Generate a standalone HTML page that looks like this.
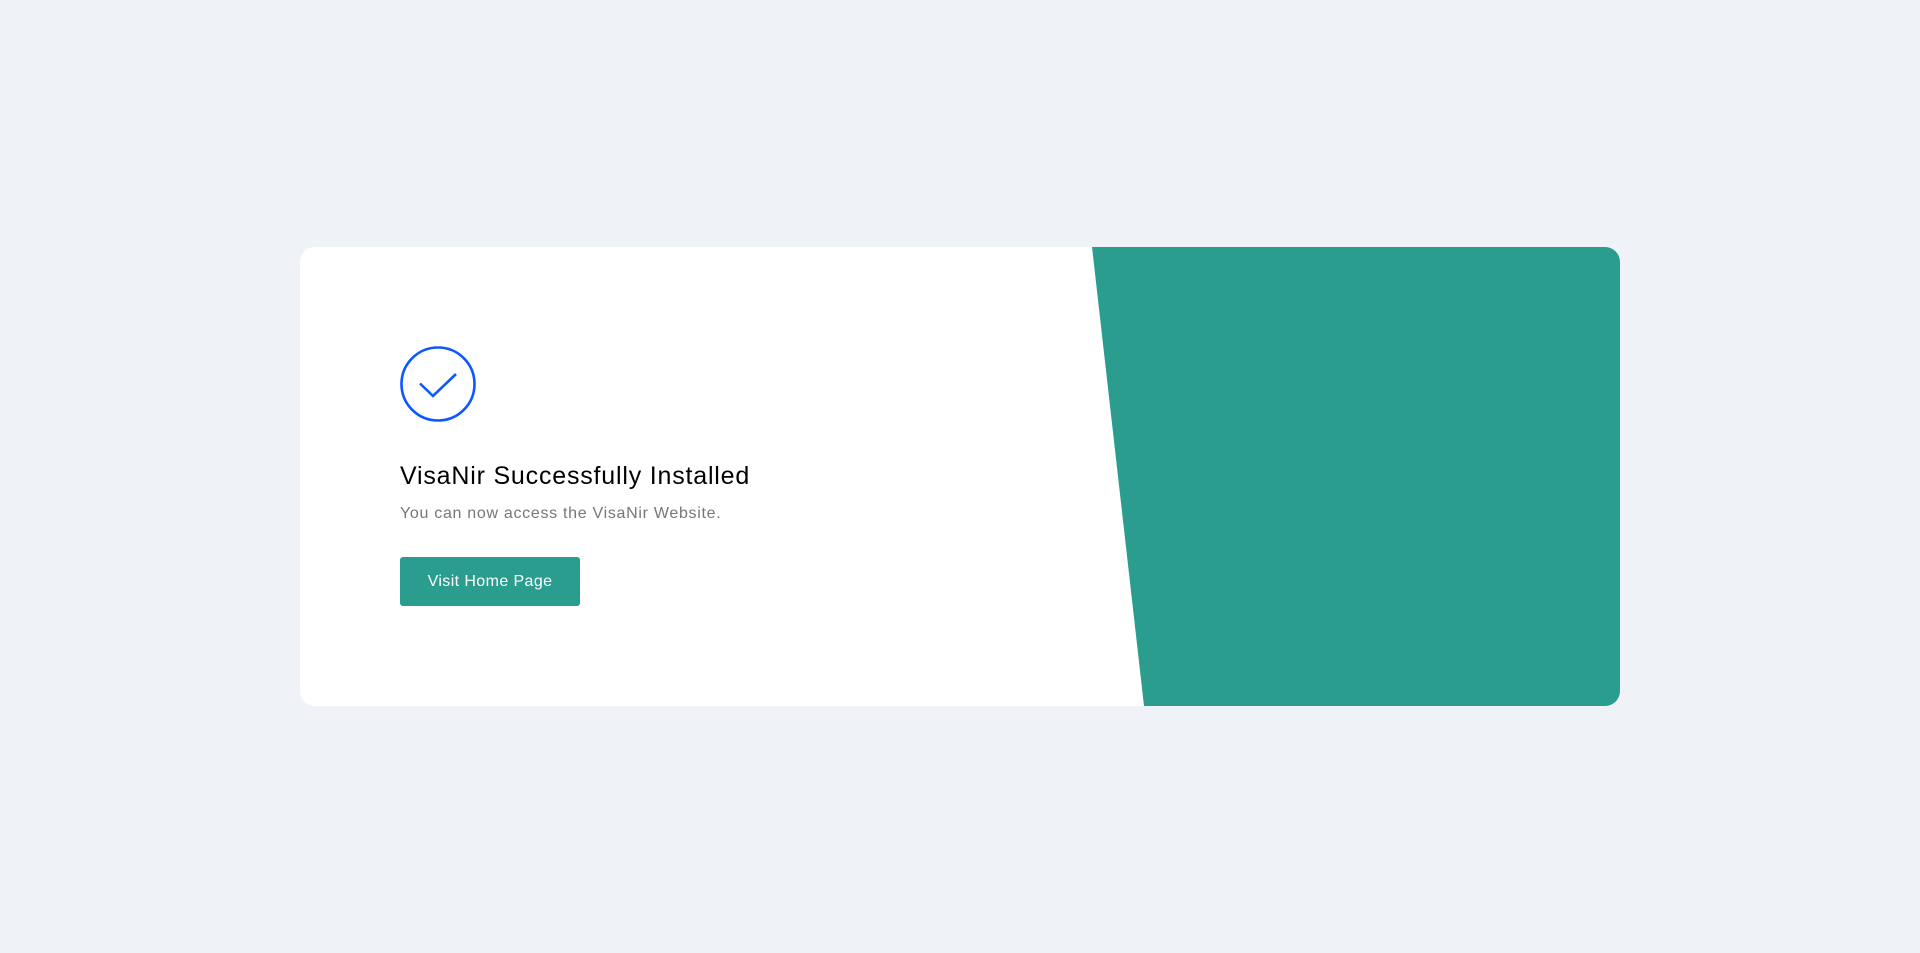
<!DOCTYPE html>
<html><head><style>
html,body{margin:0;padding:0;width:1920px;height:953px;background:#eff3f8;overflow:hidden;font-family:"Liberation Sans",sans-serif;}
.card{position:absolute;left:300px;top:247px;width:1320px;height:459px;background:#fff;border-radius:15px;overflow:hidden;}
.card svg.bg{position:absolute;left:0;top:0;}
.icon{position:absolute;left:399px;top:345px;}
h1{position:absolute;left:400px;top:462px;margin:0;font-size:25px;font-weight:normal;color:#000;letter-spacing:0.8px;white-space:nowrap;}
p{position:absolute;left:400px;top:505px;margin:0;font-size:16px;color:#777;white-space:nowrap;letter-spacing:0.7px;}
.btn{position:absolute;left:400px;top:557px;width:180px;height:49px;background:#2a9d8f;border-radius:3px;color:#fff;font-size:16px;line-height:49px;text-align:center;letter-spacing:0.4px;}
</style></head><body>
<div class="card"><svg class="bg" width="1320" height="459"><polygon points="792,0 1320,0 1320,459 844,459" fill="#2a9d8f"/></svg></div>
<svg class="icon" width="78" height="78" viewBox="0 0 78 78"><circle cx="39" cy="39" r="36.5" fill="none" stroke="#0d57ff" stroke-width="2.6"/><polyline points="21,38.5 34,51 57,29" fill="none" stroke="#0d57ff" stroke-width="2.6"/></svg>
<h1>VisaNir Successfully Installed</h1>
<p>You can now access the VisaNir Website.</p>
<div class="btn">Visit Home Page</div>
</body></html>
